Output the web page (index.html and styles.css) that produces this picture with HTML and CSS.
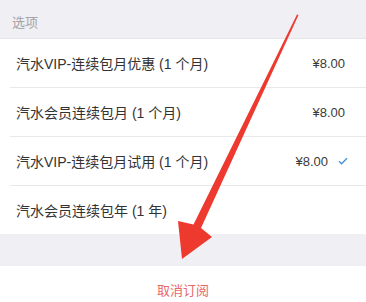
FILE: index.html
```html
<!DOCTYPE html>
<html lang="zh">
<head>
<meta charset="utf-8">
<link rel="stylesheet" href="styles.css">
</head>
<body>
<div class="page">
  <div class="section-header">选项</div>
  <ul class="options">
    <li class="option"><span class="name">汽水VIP-连续包月优惠 (1 个月)</span><span class="price">¥8.00</span></li>
    <li class="option"><span class="name">汽水会员连续包月 (1 个月)</span><span class="price">¥8.00</span></li>
    <li class="option selected"><span class="name">汽水VIP-连续包月试用 (1 个月)</span><span class="price">¥8.00</span><svg class="check" width="10" height="8" viewBox="0 0 10 8"><path d="M1 4.2 L3.6 6.8 L9 1.2" fill="none" stroke="#4a8fd8" stroke-width="1.3"/></svg></li>
    <li class="option"><span class="name">汽水会员连续包年 (1 年)</span></li>
  </ul>
  <div class="gap"></div>
  <div class="footer"><span class="cancel">取消订阅</span></div>
  <svg class="arrow" width="366" height="302" viewBox="0 0 366 302">
    <polygon points="298.5,15 201,228 212,237 182,259 178,221 193.5,224.5 297,14.5" fill="#ee3a2e"/>
  </svg>
</div>
</body>
</html>
```
FILE: styles.css
```css
html, body {
  margin: 0;
  padding: 0;
  background: #ffffff;
}
.page {
  position: relative;
  width: 366px;
  height: 302px;
  overflow: hidden;
  font-family: "Liberation Sans", "Noto Sans CJK SC", sans-serif;
}
.section-header {
  height: 39px;
  box-sizing: border-box;
  background: #efeff4;
  color: #a3a3a8;
  font-size: 13px;
  display: flex;
  align-items: center;
  padding-left: 12px;
  padding-top: 4px;
  border-bottom: 1px solid #e6e6ea;
}
.options {
  list-style: none;
  margin: 0;
  padding: 0 0 0 10px;
  background: #fff;
}
.option {
  height: 48px;
  display: flex;
  align-items: center;
  padding-left: 6px;
  padding-right: 21px;
  border-bottom: 1px solid #e8e8ea;
  color: #333;
  font-size: 14px;
}
.option:last-child {
  border-bottom: none;
}
.name {
  flex: 1;
}
.price {
  font-size: 13px;
  color: #3a3a3a;
}
.selected {
  padding-right: 18px;
}
.check {
  margin-left: 10px;
}
.gap {
  height: 32px;
  background: #efeff4;
}
.footer {
  height: 36px;
  display: flex;
  justify-content: center;
  align-items: center;
  padding-top: 10px;
  box-sizing: border-box;
}
.cancel {
  color: #e86767;
  font-size: 13px;
}
.arrow {
  position: absolute;
  left: 0;
  top: 0;
}
```
